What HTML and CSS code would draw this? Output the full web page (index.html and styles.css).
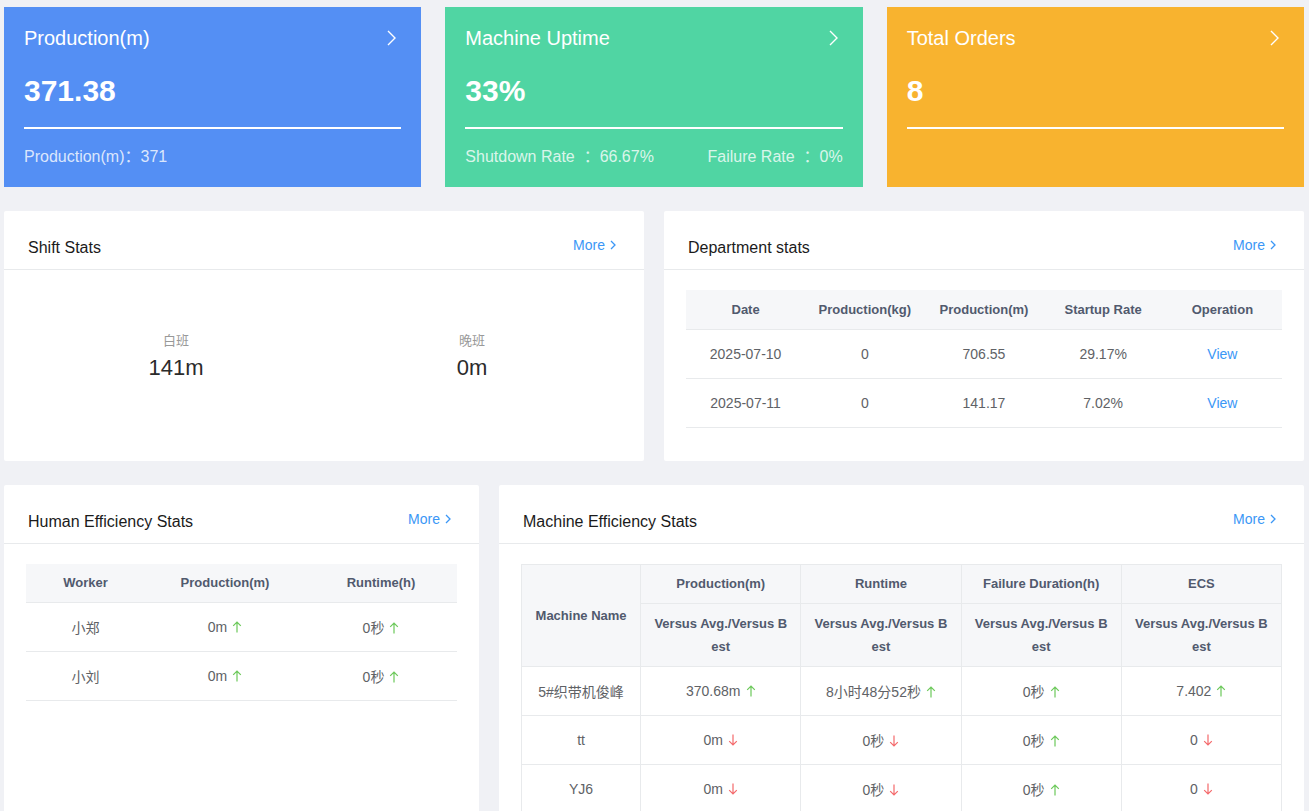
FILE: index.html
```html
<!DOCTYPE html>
<html lang="en">
<head>
<meta charset="utf-8">
<title>Dashboard</title>
<link rel="stylesheet" href="styles.css">
</head>
<body>
<div class="page">
  <section class="kpis">
    <div class="kpi kpi-blue">
      <div class="kpi-head">
        <span class="kpi-title">Production(m)</span>
        <svg class="kpi-chev" viewBox="0 0 9 16"><path d="M1 1l7 7-7 7"/></svg>
      </div>
      <div class="kpi-value">371.38</div>
      <div class="kpi-rule"></div>
      <div class="kpi-foot"><span>Production(m)：371</span></div>
    </div>
    <div class="kpi kpi-green">
      <div class="kpi-head">
        <span class="kpi-title">Machine Uptime</span>
        <svg class="kpi-chev" viewBox="0 0 9 16"><path d="M1 1l7 7-7 7"/></svg>
      </div>
      <div class="kpi-value">33%</div>
      <div class="kpi-rule"></div>
      <div class="kpi-foot"><span>Shutdown Rate &nbsp;：66.67%</span><span>Failure Rate &nbsp;：0%</span></div>
    </div>
    <div class="kpi kpi-orange">
      <div class="kpi-head">
        <span class="kpi-title">Total Orders</span>
        <svg class="kpi-chev" viewBox="0 0 9 16"><path d="M1 1l7 7-7 7"/></svg>
      </div>
      <div class="kpi-value">8</div>
      <div class="kpi-rule"></div>
      <div class="kpi-foot"></div>
    </div>
  </section>

  <section class="row row-half">
    <div class="panel">
      <div class="panel-head">
        <h3 class="panel-title">Shift Stats</h3>
        <a class="more">More<svg class="more-chev" viewBox="0 0 6 10"><path d="M1 1l4 4-4 4"/></svg></a>
      </div>
      <div class="shift-body">
        <div class="shift">
          <div class="shift-label">白班</div>
          <div class="shift-value">141m</div>
        </div>
        <div class="shift">
          <div class="shift-label">晚班</div>
          <div class="shift-value">0m</div>
        </div>
      </div>
    </div>
    <div class="panel">
      <div class="panel-head">
        <h3 class="panel-title">Department stats</h3>
        <a class="more">More<svg class="more-chev" viewBox="0 0 6 10"><path d="M1 1l4 4-4 4"/></svg></a>
      </div>
      <div class="panel-body dept-body">
        <table class="tbl">
          <thead>
            <tr><th>Date</th><th>Production(kg)</th><th>Production(m)</th><th>Startup Rate</th><th>Operation</th></tr>
          </thead>
          <tbody>
            <tr><td>2025-07-10</td><td>0</td><td>706.55</td><td>29.17%</td><td><a class="link">View</a></td></tr>
            <tr><td>2025-07-11</td><td>0</td><td>141.17</td><td>7.02%</td><td><a class="link">View</a></td></tr>
          </tbody>
        </table>
      </div>
    </div>
  </section>

  <section class="row row-split">
    <div class="panel">
      <div class="panel-head">
        <h3 class="panel-title">Human Efficiency Stats</h3>
        <a class="more">More<svg class="more-chev" viewBox="0 0 6 10"><path d="M1 1l4 4-4 4"/></svg></a>
      </div>
      <div class="panel-body">
        <table class="tbl">
          <colgroup><col class="c-first"><col class="c-mid"><col></colgroup>
          <thead>
            <tr><th>Worker</th><th>Production(m)</th><th>Runtime(h)</th></tr>
          </thead>
          <tbody>
            <tr><td>小郑</td><td>0m<svg class="arr up" viewBox="0 0 10 12"><path d="M5 11.5V1M1.2 4.8L5 1l3.8 3.8"/></svg></td><td>0秒<svg class="arr up" viewBox="0 0 10 12"><path d="M5 11.5V1M1.2 4.8L5 1l3.8 3.8"/></svg></td></tr>
            <tr><td>小刘</td><td>0m<svg class="arr up" viewBox="0 0 10 12"><path d="M5 11.5V1M1.2 4.8L5 1l3.8 3.8"/></svg></td><td>0秒<svg class="arr up" viewBox="0 0 10 12"><path d="M5 11.5V1M1.2 4.8L5 1l3.8 3.8"/></svg></td></tr>
          </tbody>
        </table>
      </div>
    </div>
    <div class="panel">
      <div class="panel-head">
        <h3 class="panel-title">Machine Efficiency Stats</h3>
        <a class="more">More<svg class="more-chev" viewBox="0 0 6 10"><path d="M1 1l4 4-4 4"/></svg></a>
      </div>
      <div class="panel-body">
        <table class="tbl tbl-bordered">
          <colgroup><col class="c-first"><col class="c-mid"><col class="c-mid"><col class="c-mid"><col class="c-mid"></colgroup>
          <thead>
            <tr>
              <th rowspan="2">Machine Name</th>
              <th>Production(m)</th><th>Runtime</th><th>Failure Duration(h)</th><th>ECS</th>
            </tr>
            <tr class="sub">
              <th>Versus Avg./Versus Best</th><th>Versus Avg./Versus Best</th><th>Versus Avg./Versus Best</th><th>Versus Avg./Versus Best</th>
            </tr>
          </thead>
          <tbody>
            <tr>
              <td>5#织带机俊峰</td>
              <td>370.68m<svg class="arr up" viewBox="0 0 10 12"><path d="M5 11.5V1M1.2 4.8L5 1l3.8 3.8"/></svg></td>
              <td>8小时48分52秒<svg class="arr up" viewBox="0 0 10 12"><path d="M5 11.5V1M1.2 4.8L5 1l3.8 3.8"/></svg></td>
              <td>0秒<svg class="arr up" viewBox="0 0 10 12"><path d="M5 11.5V1M1.2 4.8L5 1l3.8 3.8"/></svg></td>
              <td>7.402<svg class="arr up" viewBox="0 0 10 12"><path d="M5 11.5V1M1.2 4.8L5 1l3.8 3.8"/></svg></td>
            </tr>
            <tr>
              <td>tt</td>
              <td>0m<svg class="arr down" viewBox="0 0 10 12"><path d="M5 0.5V11M1.2 7.2L5 11l3.8-3.8"/></svg></td>
              <td>0秒<svg class="arr down" viewBox="0 0 10 12"><path d="M5 0.5V11M1.2 7.2L5 11l3.8-3.8"/></svg></td>
              <td>0秒<svg class="arr up" viewBox="0 0 10 12"><path d="M5 11.5V1M1.2 4.8L5 1l3.8 3.8"/></svg></td>
              <td>0<svg class="arr down" viewBox="0 0 10 12"><path d="M5 0.5V11M1.2 7.2L5 11l3.8-3.8"/></svg></td>
            </tr>
            <tr>
              <td>YJ6</td>
              <td>0m<svg class="arr down" viewBox="0 0 10 12"><path d="M5 0.5V11M1.2 7.2L5 11l3.8-3.8"/></svg></td>
              <td>0秒<svg class="arr down" viewBox="0 0 10 12"><path d="M5 0.5V11M1.2 7.2L5 11l3.8-3.8"/></svg></td>
              <td>0秒<svg class="arr up" viewBox="0 0 10 12"><path d="M5 11.5V1M1.2 4.8L5 1l3.8 3.8"/></svg></td>
              <td>0<svg class="arr down" viewBox="0 0 10 12"><path d="M5 0.5V11M1.2 7.2L5 11l3.8-3.8"/></svg></td>
            </tr>
          </tbody>
        </table>
      </div>
    </div>
  </section>
</div>
</body>
</html>
```

FILE: styles.css
```css
* { box-sizing: border-box; }
html, body { margin: 0; padding: 0; }
body {
  background: #f0f1f5;
  font-family: "Liberation Sans", "Noto Sans CJK SC", sans-serif;
  color: #333;
}
.page { padding: 7px 5px 40px 4px; }

/* KPI cards */
.kpis {
  display: grid;
  grid-template-columns: 1fr 1fr 1fr;
  gap: 24px;
}
.kpi {
  color: #fff;
  padding: 17px 20px 19px 20px;
  display: flex;
  flex-direction: column;
}
.kpi-blue { background: #548ff4; }
.kpi-green { background: #50d5a3; }
.kpi-orange { background: #f8b32f; }
.kpi-head {
  display: flex;
  justify-content: space-between;
  align-items: center;
  height: 28px;
}
.kpi-title { font-size: 20px; line-height: 28px; }
.kpi-chev {
  width: 9px; height: 16px;
  margin-right: 5px;
  fill: none; stroke: #fff; stroke-width: 1.4;
}
.kpi-value {
  margin-top: 19px;
  font-size: 30px;
  line-height: 40px;
  font-weight: bold;
}
.kpi-rule {
  margin-top: 16px;
  height: 2px;
  background: #fff;
}
.kpi-foot {
  margin-top: 17px;
  height: 22px;
  line-height: 22px;
  font-size: 16px;
  color: rgba(255,255,255,0.8);
  display: flex;
  justify-content: space-between;
}

/* rows */
.row { display: grid; gap: 20px; margin-top: 24px; }
.row-half { grid-template-columns: 1fr 1fr; }
.row-split { grid-template-columns: 475px 1fr; }

.panel {
  background: #fff;
  border-radius: 2px;
}
.panel-head {
  display: flex;
  justify-content: space-between;
  align-items: flex-start;
  padding: 24px 28px 9px 24px;
  border-bottom: 1px solid #e8eaec;
}
.panel-title {
  margin: 1px 0 0;
  font-size: 16px;
  line-height: 24px;
  font-weight: normal;
  color: #1b1b1b;
}
.more {
  font-size: 14px;
  line-height: 20px;
  color: #3b97f6;
  display: flex;
  align-items: center;
  gap: 5px;
}
.more-chev {
  width: 6px; height: 10px;
  fill: none; stroke: #3b97f6; stroke-width: 1.3;
}

.shift-body {
  display: grid;
  grid-template-columns: 1fr 1fr;
  padding: 61px 24px 0;
  text-align: center;
}
.shift-label { font-size: 13px; line-height: 20px; color: #999; }
.shift-value { margin-top: 2px; font-size: 22px; line-height: 30px; color: #2b2b2b; }

.panel-body { padding: 20px 22px; }
.dept-body { padding-bottom: 33px; }

/* tables */
.tbl {
  width: 100%;
  border-collapse: collapse;
  table-layout: fixed;
  font-size: 14px;
  color: #606266;
}
.tbl th {
  background: #f6f7f9;
  color: #515a6e;
  font-weight: bold;
  font-size: 13px;
  height: 39px;
  padding: 0 10px;
  text-align: center;
  border-bottom: 1px solid #e8eaec;
}
.tbl td {
  height: 49px;
  padding: 0 10px;
  text-align: center;
  border-bottom: 1px solid #e8eaec;
  white-space: nowrap;
}
.c-first { width: 119px; }
.c-mid { width: 160px; }
.tbl-bordered { border: 1px solid #e8eaec; }
.tbl-bordered th, .tbl-bordered td { border: 1px solid #e8eaec; }
.tbl-bordered .sub th {
  height: auto;
  line-height: 23px;
  padding: 8px 10px;
  word-break: break-all;
}
.link { color: #3b97f6; }

.arr {
  width: 10px; height: 12px;
  margin-left: 5px;
  vertical-align: -1px;
  fill: none; stroke-width: 1.2;
}
.arr.up { stroke: #6cc95a; }
.arr.down { stroke: #f4696b; }
```
